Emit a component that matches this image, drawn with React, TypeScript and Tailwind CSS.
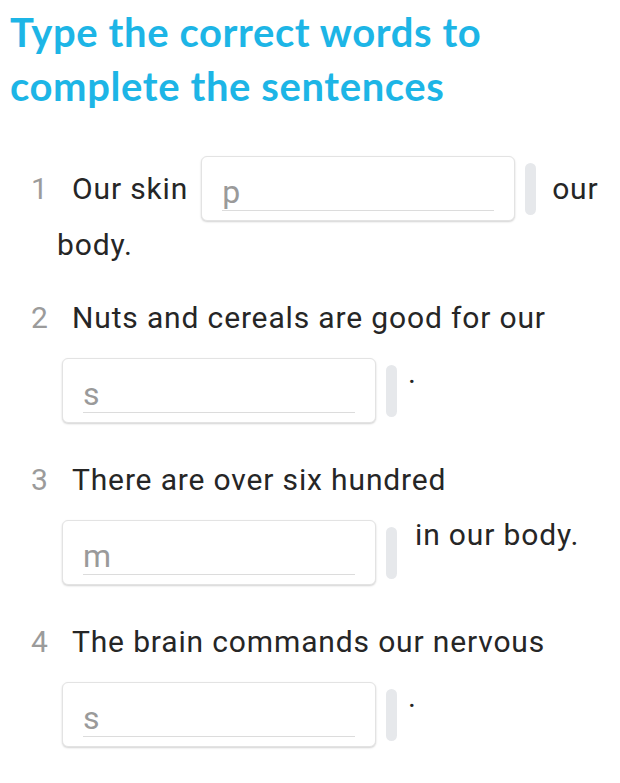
import React from "react";

const Box = ({ hint }: { hint: string }) => (
  <div className="flex items-center shrink-0">
    <div className="w-[314px] h-[65px] rounded-[6px] border border-[#e3e3e3] bg-white shadow-[0_1px_2px_rgba(0,0,0,0.18)] px-[20px] pt-[13px]">
      <input
        readOnly
        placeholder={hint}
        className="w-full h-[36px] bg-transparent border-b border-[#dcdcdc] outline-none text-[32px] leading-[35px] tracking-normal text-[#8f8f8f] placeholder:text-[#9a9a9a] p-0"
        style={{ fontFamily: "Roboto, sans-serif" }}
      />
    </div>
    <div className="ml-[10px] w-[11px] h-[52px] rounded-full bg-[#e6e8eb]" />
  </div>
);

const Num = ({ n }: { n: string }) => (
  <span className="w-[17px] shrink-0 text-[#9b9b9b] tabular-nums tracking-normal">{n}</span>
);

export default function App() {
  return (
    <div
      className="w-[620px] h-[783px] bg-white overflow-hidden text-[#262626] text-[30px] tracking-[0.85px]"
      style={{ fontFamily: "Roboto, sans-serif" }}
    >
      <h1
        className="mt-[5px] pl-[10px] text-[40px] leading-[54px] font-bold text-[#1db5e6] tracking-[0.6px]"
        style={{ fontFamily: "Lato, sans-serif" }}
      >
        Type the correct words to
        <br />
        complete the sentences
      </h1>

      <div className="mt-[43px] flex flex-col gap-[33px]">
        {/* 1 */}
        <div className="flex flex-col">
          <div className="flex items-center h-[65px] mb-[4px] pl-[31px]">
            <Num n="1" />
            <span className="ml-[24px]">Our skin</span>
            <div className="ml-[13px]">
              <Box hint="p" />
            </div>
            <span className="ml-[16px]">our</span>
          </div>
          <div className="pl-[57px] leading-[40px]">body.</div>
        </div>

        {/* 2 */}
        <div className="flex flex-col">
          <div className="flex leading-[40px] pl-[31px]">
            <Num n="2" />
            <span className="ml-[24px]">Nuts and cereals are good for our</span>
          </div>
          <div className="flex items-start mt-[20px] mb-[4px] pl-[62px]">
            <Box hint="s" />
            <span className="ml-[11px] leading-[30px]">.</span>
          </div>
        </div>

        {/* 3 */}
        <div className="flex flex-col">
          <div className="flex leading-[40px] pl-[31px]">
            <Num n="3" />
            <span className="ml-[24px]">There are over six hundred</span>
          </div>
          <div className="flex items-start mt-[20px] mb-[4px] pl-[62px]">
            <Box hint="m" />
            <span className="ml-[18px] leading-[30px]">in our body.</span>
          </div>
        </div>

        {/* 4 */}
        <div className="flex flex-col">
          <div className="flex leading-[40px] pl-[31px]">
            <Num n="4" />
            <span className="ml-[24px]">The brain commands our nervous</span>
          </div>
          <div className="flex items-start mt-[20px] mb-[4px] pl-[62px]">
            <Box hint="s" />
            <span className="ml-[11px] leading-[30px]">.</span>
          </div>
        </div>
      </div>
    </div>
  );
}
